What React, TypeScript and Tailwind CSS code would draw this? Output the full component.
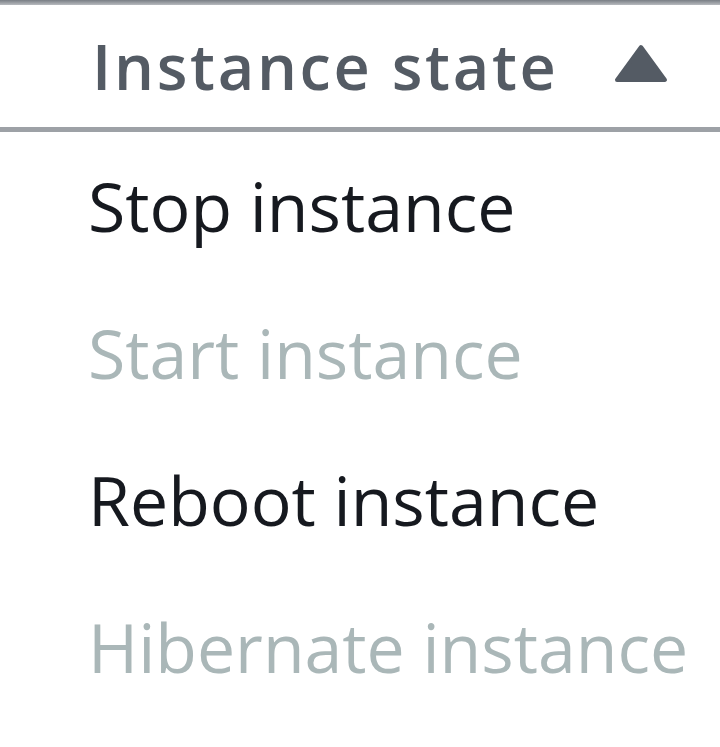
import React from "react";

const items: { label: string; disabled: boolean }[] = [
  { label: "Stop instance", disabled: false },
  { label: "Start instance", disabled: true },
  { label: "Reboot instance", disabled: false },
  { label: "Hibernate instance", disabled: true },
];

export default function App() {
  return (
    <div className="w-[720px] h-[747px] bg-white overflow-hidden font-['Open_Sans',sans-serif]">
      <div className="h-[5px] bg-gradient-to-b from-[#797e85] to-[#b8bbbf]" />
      <div className="flex items-center h-[122px] pl-[92px]">
        <span className="text-[63px] leading-[86px] font-semibold tracking-[2.7px] text-[#545b64]">
          Instance state
        </span>
        <svg
          className="ml-[54px] mt-[-6px]"
          width="56"
          height="40"
          viewBox="0 0 56 40"
          aria-hidden="true"
        >
          <polygon
            points="28,4 52,37 4,37"
            fill="#545b64"
            stroke="#545b64"
            strokeWidth="4"
            strokeLinejoin="round"
          />
        </svg>
      </div>
      <div className="h-[5px] bg-[#9da1a6]" />
      <ul className="flex flex-col pl-[88px]">
        {items.map((it) => (
          <li
            key={it.label}
            className={
              it.disabled
                ? "text-[68px] leading-[147px] text-[#aab7b8] whitespace-nowrap"
                : "text-[68px] leading-[147px] text-[#16191f] whitespace-nowrap"
            }
          >
            {it.label}
          </li>
        ))}
      </ul>
    </div>
  );
}
